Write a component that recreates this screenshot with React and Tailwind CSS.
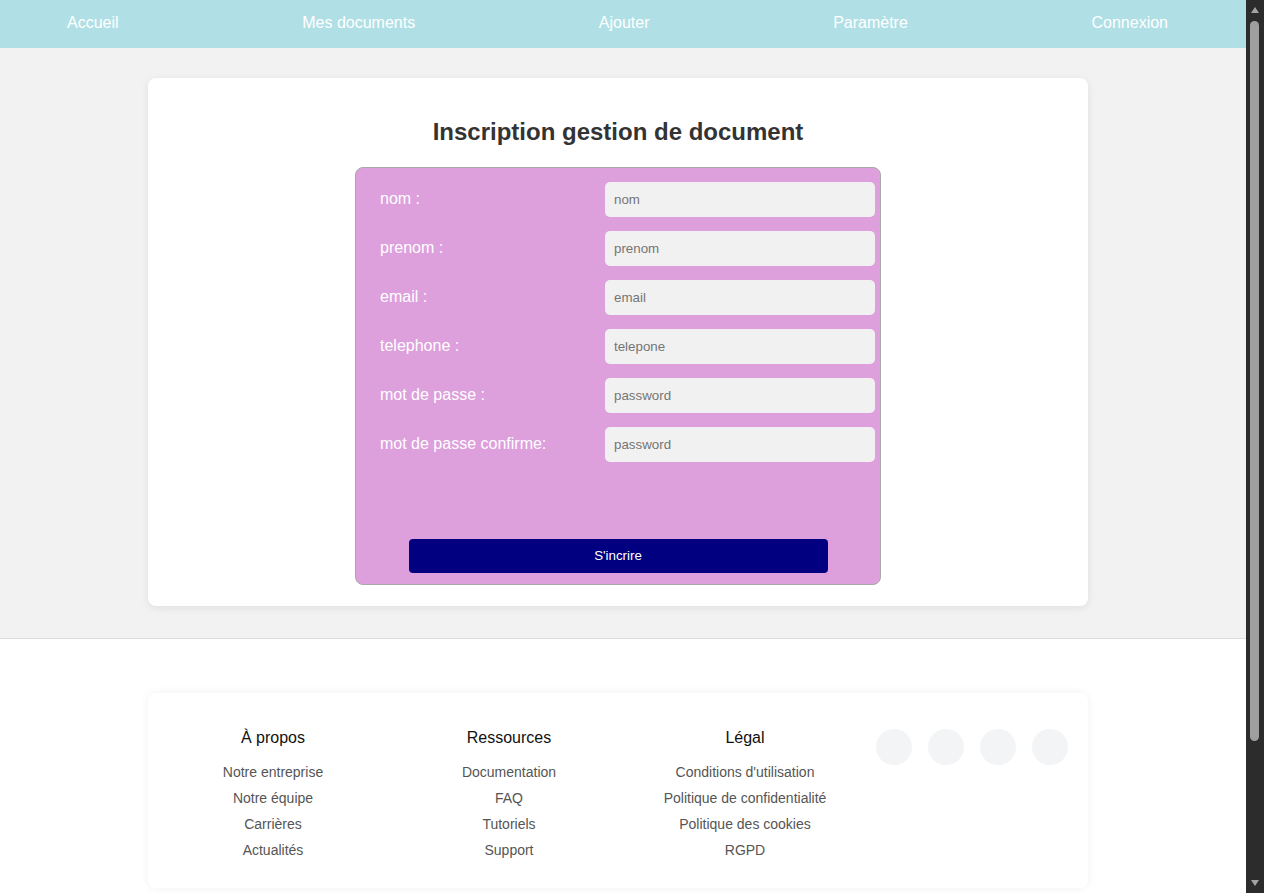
import React from "react";

const fields = [
  { label: "nom :", ph: "nom", type: "text" },
  { label: "prenom :", ph: "prenom", type: "text" },
  { label: "email :", ph: "email", type: "email" },
  { label: "telephone :", ph: "telepone", type: "text" },
  { label: "mot de passe :", ph: "password", type: "password" },
  { label: "mot de passe confirme:", ph: "password", type: "password" },
];

const cols = [
  { title: "À propos", links: ["Notre entreprise", "Notre équipe", "Carrières", "Actualités"] },
  { title: "Ressources", links: ["Documentation", "FAQ", "Tutoriels", "Support"] },
  { title: "Légal", links: ["Conditions d'utilisation", "Politique de confidentialité", "Politique des cookies", "RGPD"] },
];

function FakeScrollbar() {
  return (
    <div className="fixed top-0 right-0 w-[18px] h-[893px] bg-[#2c2c2c] flex flex-col items-center">
      <svg width="10" height="18" viewBox="0 0 10 18" className="mt-[1px]">
        <polygon points="1,12 9,12 5,6" fill="#a3a3a3" />
      </svg>
      <div className="mt-[2px] w-[9px] h-[720px] rounded-[5px] bg-[#9f9f9f] ml-[-1px]" />
      <div className="flex-1" />
      <svg width="10" height="18" viewBox="0 0 10 18" className="mb-[1px]">
        <polygon points="1,6 9,6 5,12" fill="#a3a3a3" />
      </svg>
    </div>
  );
}

export default function App() {
  return (
    <div className="w-[1246px] min-h-[1062px] bg-white font-['Liberation_Sans',Arial,sans-serif]">
      <nav className="h-[48px] bg-[#b0e0e6] flex items-center justify-between pl-[67px] pr-[78px] text-white text-[16px] leading-[20px]">
        <a className="-mt-[2px]">Accueil</a>
        <a className="-mt-[2px]">Mes documents</a>
        <a className="-mt-[2px]">Ajouter</a>
        <a className="-mt-[2px]">Paramètre</a>
        <a className="-mt-[2px]">Connexion</a>
      </nav>

      <main className="bg-[#f2f2f2] pt-[30px] pb-[32px] border-b border-[#dddddd]">
        <div className="ml-[148px] w-[940px] bg-white rounded-lg shadow-[0_2px_8px_rgba(0,0,0,0.08)] pt-[40px] pb-[21px] flex flex-col items-center">
          <h1 className="text-[24px] leading-[28px] font-bold text-[#333333] mb-[21px]">
            Inscription gestion de document
          </h1>
          <form
            className="w-[526px] h-[418px] bg-[#dda0dd] border border-[#aaaaaa] rounded-lg pt-[14px] pl-[24px] pr-[4px] pb-[11px] flex flex-col"
            onSubmit={(e) => e.preventDefault()}
          >
            <div className="flex flex-col gap-[14px]">
              {fields.map((f, i) => (
                <div key={i} className="flex items-center h-[35px]">
                  <label className="w-[225px] text-white text-[16px] leading-[20px] -mt-[2px]">{f.label}</label>
                  <input
                    type={f.type}
                    placeholder={f.ph}
                    className="w-[270px] h-[35px] bg-[#f1f1f1] rounded-[5px] pl-[9px] text-[13.33px] font-['Liberation_Sans',Arial,sans-serif] text-[#333] placeholder:text-[#757575] outline-none"
                  />
                </div>
              ))}
            </div>
            <div className="flex-1" />
            <button
              type="submit"
              className="self-center -ml-[20px] w-[419px] h-[34px] bg-[#000080] text-white text-[13.33px] rounded-[4px]"
            >
              S'incrire
            </button>
          </form>
        </div>
      </main>

      <footer className="bg-white pt-[54px] pb-[175px]">
        <div className="ml-[148px] w-[940px] bg-white rounded-lg shadow-[0_0_10px_rgba(0,0,0,0.06)] pl-[20px] pt-[33px] pb-[25px] flex gap-[26px]">
          {cols.map((c) => (
            <div key={c.title} className="w-[210px] flex flex-col items-center">
              <h3 className="text-[16px] leading-[24px] text-[#111111] mb-[9px]">{c.title}</h3>
              <ul className="flex flex-col items-center text-[14px] leading-[26px] text-[#555555]">
                {c.links.map((l) => (
                  <li key={l}>{l}</li>
                ))}
              </ul>
            </div>
          ))}
          <div className="flex gap-[16px] items-start pt-[3px]">
            {[0, 1, 2, 3].map((i) => (
              <span key={i} className="w-[36px] h-[36px] rounded-full bg-[#f3f4f6]" />
            ))}
          </div>
        </div>
      </footer>
      <FakeScrollbar />
    </div>
  );
}
